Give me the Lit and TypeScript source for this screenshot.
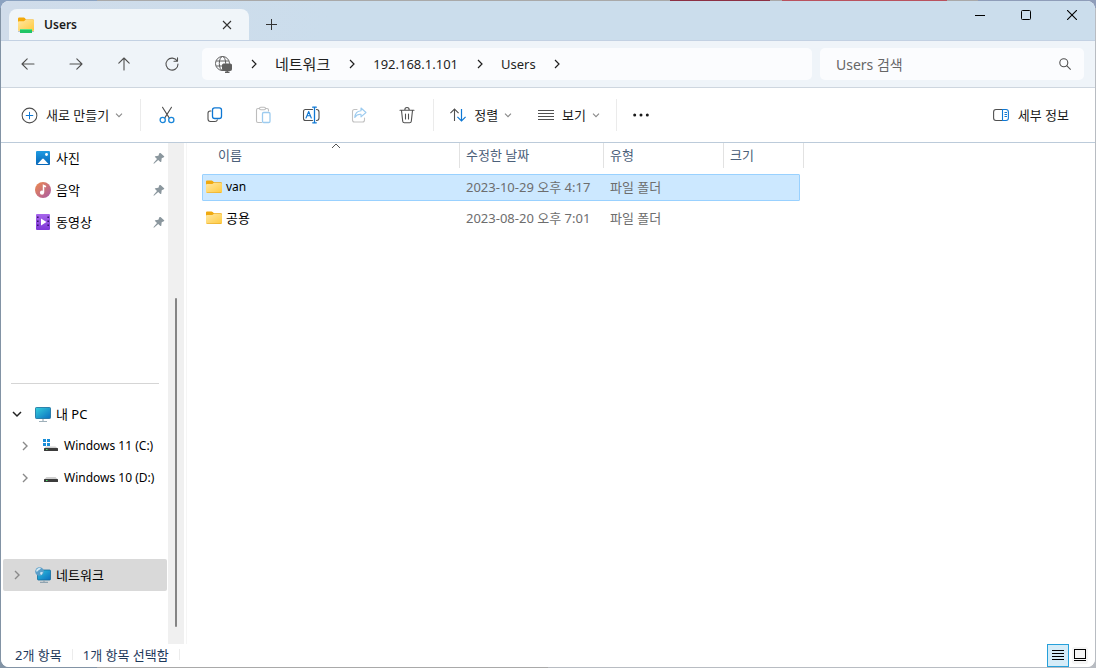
import { LitElement, html, css, svg, nothing } from "lit";
import { customElement, property, state } from "lit/decorators.js";
import { classMap } from "lit/directives/class-map.js";

const chevronRight = html`<svg width="8" height="10" viewBox="0 0 8 10" fill="none" stroke="currentColor" stroke-width="1.2"><path d="M2 1l4 4-4 4" /></svg>`;
const chevronDown = html`<svg width="8" height="8" viewBox="0 0 8 8" fill="none" stroke="#8a8a8a" stroke-width="1.1"><path d="M1 2.6l3 3 3-3" /></svg>`;

const folder = html`<svg width="16" height="14" viewBox="0 0 16 14">
  <defs><linearGradient id="f" x1="0" y1="0" x2="1" y2="1"><stop offset="0" stop-color="#ffe7a2" /><stop offset="1" stop-color="#ffca3e" /></linearGradient></defs>
  <path d="M0 1.5Q0 .5 1 .5h4.6q.6 0 1 .4L8 2.2h7q1 0 1 1V7H0z" fill="#f0a90f" />
  <path d="M0 5q0-1 1-1h4.8q.5 0 .9-.3L7.6 3H15q1 0 1 1v8q0 1-1 1H1q-1 0-1-1z" fill="url(#f)" />
  <path d="M.5 12.6q.2.4.8.4h13.4q.6 0 .8-.4z" fill="#e3a11c" /></svg>`;

const netFolder = html`<svg width="18" height="18" viewBox="0 0 18 18">
  <defs><linearGradient id="nf" x1="0" y1="0" x2="1" y2="1"><stop offset="0" stop-color="#ffe7a2" /><stop offset="1" stop-color="#ffca3e" /></linearGradient></defs>
  <path d="M1 3q0-1.400 1.200-1.400h4.600q.6 0 1 .5L9 3.400h7q1 0 1 1V8H1z" fill="#f3a90a" />
  <path d="M1 6.200q0-1 1-1h5l1.600-1.400H16q1 0 1 1V14q0 1-1 1H2q-1 0-1-1z" fill="url(#nf)" />
  <path d="M1 15.500h16" stroke="#b9c5cc" />
  <rect x="3" y="13" width="12" height="4" rx=".6" fill="#1fc566" /><path d="M3 13.500h12" stroke="#5be584" /></svg>`;

const globe = html`<svg width="17" height="17" viewBox="0 0 17 17" fill="none" stroke="#5f5f5f" stroke-width="1">
  <circle cx="7.500" cy="7.500" r="7" /><ellipse cx="7.500" cy="7.500" rx="3.200" ry="7" /><path d="M1.200 5h12.600M1.200 10h7" />
  <rect x="7.500" y="8" width="9" height="6.500" rx="1" fill="#5f5f5f" stroke="#5f5f5f" /><path d="M10 16.300h4.500M12.200 14v2" stroke-width="1.400" /></svg>`;

const line = (content: unknown, size = 18) =>
  html`<svg width=${size} height=${size} viewBox="0 0 18 18" fill="none" stroke="#505050" stroke-width="1.1" stroke-linecap="round" stroke-linejoin="round">${content}</svg>`;

const nav = {
  back: line(svg`<path d="M15 9H3M8.200 3.800L3 9l5.200 5.200" />`),
  forward: line(svg`<path d="M3 9h12M9.800 3.800L15 9l-5.200 5.200" />`),
  up: line(svg`<path d="M9 15V3M3.800 8.200L9 3l5.200 5.200" />`),
  refresh: line(svg`<path d="M14.200 6.100A6 6 0 1 0 15 9M14.500 2.800v3.500H11" />`),
};

const tools = {
  add: line(svg`<circle cx="9" cy="9" r="7.800" /><path d="M9 5.500v7M5.500 9h7" stroke="#0f78d4" />`, 17),
  cut: line(svg`<path d="M4.500 1.300l6.700 10.600M13.500 1.300L6.800 11.900" /><g stroke="#1a86d9" stroke-width="1.300"><circle cx="4.700" cy="14" r="2.600" /><circle cx="13.300" cy="14" r="2.600" /></g>`),
  copy: line(svg`<path d="M5 5H4.200Q2 5 2 7.200V13q0 2.500 2.500 2.500H9q2 0 2.300-1.700" /><rect x="6.500" y="1.800" width="9" height="10.700" rx="2.200" stroke="#0f78d4" stroke-width="1.300" />`),
  paste: line(svg`<g stroke="#bdbdbd"><path d="M5.500 2.500H4Q2.500 2.500 2.500 4v11q0 1.500 1.500 1.500h3.500M11.500 2.500H13q1.500 0 1.500 1.500v1" /><rect x="5.500" y="1.200" width="6" height="2.600" rx="1.200" /></g><rect x="8.500" y="6.500" width="7.500" height="10" rx="1.200" stroke="#9ccbef" stroke-width="1.300" />`),
  rename: line(svg`<path d="M10.500 3.500h-7Q1.500 3.500 1.500 5.500v7q0 2 2 2h7M14.500 3.500q2.500 0 2.500 2.500v6q0 2.500-2.500 2.500" /><path d="M4 12l2.700-6.500L9.300 12M5 9.800h3.500" stroke="#0f78d4" /><path d="M12.500 1.200v15.600M10.700 1.200h3.600M10.700 16.800h3.600" stroke="#0f78d4" stroke-width="1.300" />`),
  share: line(svg`<path d="M7 3.500H4.500q-2 0-2 2V14q0 2 2 2h8q2 0 2-2v-2" stroke="#c2c2c2" /><path d="M11 2l5 4.500-5 4.300V8.300Q7 8 4.800 11.500 5.200 5.300 11 4.800z" stroke="#9ccbef" />`),
  remove: line(svg`<path d="M2 4.200h14M6.800 4q0-2.500 2.200-2.500T11.200 4M3.500 4.500l1.200 10.700q.2 1.600 1.600 1.600h5.400q1.400 0 1.600-1.600L14.500 4.500M7.500 8v5M10.500 8v5" />`),
  sort: html`<svg width="16" height="16" viewBox="0 0 16 16" fill="none" stroke="#505050" stroke-width="1.100"><path d="M4.500 14V2M.4 6.100L4.500 2l4.100 4.100" /><path d="M11.500 2v12M7.400 9.900l4.100 4.100 4.100-4.100" stroke="#0f78d4" stroke-width="1.200" /></svg>`,
  view: html`<svg width="16" height="16" viewBox="0 0 16 16" stroke="#505050" shape-rendering="crispEdges"><path d="M0 3.500h16M0 6.500h16M0 9.500h16M0 12.500h16" /></svg>`,
  more: html`<svg width="16" height="4" viewBox="0 0 16 4" fill="#1a1a1a"><circle cx="1.700" cy="2" r="1.500" /><circle cx="8" cy="2" r="1.500" /><circle cx="14.300" cy="2" r="1.500" /></svg>`,
  details: html`<svg width="16" height="14" viewBox="0 0 16 14" fill="none" stroke-width="1.100"><path d="M9.500 1.500H3Q.6 1.500.6 4v6q0 2.500 2.400 2.500h6.500" stroke="#505050" /><path d="M9.500 1.500H13q2.400 0 2.400 2.500v6q0 2.500-2.400 2.500H9.500zM11.500 4.500h2.500M11.500 6.500h2.500M11.500 8.500h2.500" stroke="#0f78d4" /></svg>`,
};

const places = {
  pictures: html`<svg width="16" height="16" viewBox="0 0 16 16"><defs><linearGradient id="p" x2="0" y2="1"><stop stop-color="#1f9be2" /><stop offset="1" stop-color="#0766b8" /></linearGradient></defs><rect x="1" y="1" width="14" height="14" rx="1" fill="url(#p)" /><path d="M2.500 14l4.700-5q.8-.8 1.600 0l4.700 5z" fill="#fff" /><circle cx="11.500" cy="4.500" r="1.400" fill="#fff" /></svg>`,
  music: html`<svg width="16" height="16" viewBox="0 0 16 16"><defs><linearGradient id="m" x2="1" y2="1"><stop stop-color="#ee8a4c" /><stop offset="1" stop-color="#a95aa6" /></linearGradient></defs><circle cx="8" cy="8" r="8" fill="url(#m)" /><path d="M8.500 10.500V3.500l2.500 1.200" stroke="#fff" stroke-width="1.500" fill="none" /><circle cx="7" cy="10.700" r="2.100" fill="#fff" /></svg>`,
  videos: html`<svg width="16" height="16" viewBox="0 0 16 16"><defs><linearGradient id="v" x2="0" y2="1"><stop stop-color="#a765ea" /><stop offset="1" stop-color="#7f37d8" /></linearGradient></defs><rect x="1" y="0" width="14" height="16" rx="1" fill="url(#v)" /><path d="M6 4.500v7L11.500 8z" fill="#fff" /><path d="M2.800 2.500v12M13.200 2.500v12" stroke="#3a1470" stroke-width="1.600" stroke-dasharray="1.600 2.400" /></svg>`,
  pc: html`<svg width="16" height="16" viewBox="0 0 16 16"><defs><linearGradient id="c" x2="1" y2="1"><stop stop-color="#35d0dc" /><stop offset="1" stop-color="#0b6fc0" /></linearGradient></defs><rect x=".5" y="1.500" width="15" height="11" rx=".8" fill="url(#c)" stroke="#146c9c" stroke-width=".8" /><path d="M8 13v2M4 15.500h8" stroke="#9fb0ba" stroke-width="1.200" /></svg>`,
  driveC: html`<svg width="16" height="16" viewBox="0 0 16 16"><path d="M0 1h3v3H0zM4 1h3v3H4zM0 5h3v3H0zM4 5h3v3H4z" fill="#1a8fd8" /><path d="M3 8.500h9.500L15 10.500H1z" fill="#cfcfcf" /><rect x="1" y="10" width="14" height="3" rx=".5" fill="#3b3b3b" /><path d="M3 11.500h1.500" stroke="#4be36a" /></svg>`,
  driveD: html`<svg width="16" height="16" viewBox="0 0 16 16"><path d="M3.500 7h9l2.500 2.500H1z" fill="#cfcfcf" /><rect x="1" y="9" width="14" height="3" rx=".5" fill="#3b3b3b" /><path d="M3 10.500h1.500" stroke="#4be36a" /></svg>`,
  network: html`<svg width="16" height="16" viewBox="0 0 16 16"><defs><linearGradient id="n" x2="1" y2="1"><stop stop-color="#2fc4dc" /><stop offset="1" stop-color="#0b6fc0" /></linearGradient></defs><rect x="2.500" y="3" width="13" height="10" rx=".8" fill="url(#n)" stroke="#146c9c" stroke-width=".8" /><path d="M9 13v2M5 15.400h8" stroke="#8fa3b0" stroke-width="1.200" /><circle cx="4.500" cy="4.500" r="4.300" fill="#5b9fc9" /><path d="M1.500 2.500Q4 0 6 1.300 5 3 3.500 3.200 3 5 1 4.500zM5 5.500q2-1 3 0L6.500 8Q5 7.500 5 5.500z" fill="#cfe7f4" /></svg>`,
};

const pin = html`<svg width="12" height="12" viewBox="0 0 12 12" fill="#8b979e"><path d="M6.300 1.300q.5-.7 1.200-.2l3.600 3.200q.6.7-.3 1L8.700 6.300 8.300 9.500q-.2.900-.9.400L5.200 8.100 1 11.800l-.6-.6L4 7 2 5.100q-.5-.7.300-.9l3.100-.4z" /></svg>`;

interface Place { name: string; icon: keyof typeof places; pinned?: boolean; open?: boolean; child?: boolean; closed?: boolean; current?: boolean }

const pinned: Place[] = [
  { name: "사진", icon: "pictures", pinned: true },
  { name: "음악", icon: "music", pinned: true },
  { name: "동영상", icon: "videos", pinned: true },
];
const devices: Place[] = [
  { name: "내 PC", icon: "pc", open: true },
  { name: "Windows 11 (C:)", icon: "driveC", closed: true, child: true },
  { name: "Windows 10 (D:)", icon: "driveD", closed: true, child: true },
];
const network: Place[] = [{ name: "네트워크", icon: "network", closed: true, current: true }];

const files = [
  { name: "van", date: "2023-10-29 오후 4:17", type: "파일 폴더", size: "" },
  { name: "공용", date: "2023-08-20 오후 7:01", type: "파일 폴더", size: "" },
];

const base = css`
  :host { box-sizing: border-box; }
  *, *::before, *::after { box-sizing: border-box; }
  button { font: inherit; color: inherit; background: none; border: 0; padding: 0; margin: 0; display: flex; align-items: center; justify-content: center; }
  a { color: inherit; text-decoration: none; }
  svg { display: block; flex: none; }
`;

@customElement("title-bar")
class TitleBar extends LitElement {
  static styles = [base, css`
    :host { display: flex; height: 40px; padding: 8px 0 0 8px; background: linear-gradient(90deg, #d0dcea, #cbddec 30%); border-bottom: 1px solid #c3d1e3; }
    .tab { display: flex; align-items: center; width: 240px; height: 31px; padding: 0 14px 0 8px; gap: 9px; background: #f0f5f9; border-radius: 8px 8px 0 0; }
    .name { flex: 1; font-size: 12px; font-weight: 600; }
    .add { width: 45px; height: 30px; }
    .controls { display: flex; margin: -8px 0 0 auto; }
    .controls button { width: 46px; height: 28px; }
  `];
  render() {
    return html`
      <div class="tab">
        ${netFolder}<span class="name">Users</span>
        <button aria-label="탭 닫기"><svg width="16" height="16" viewBox="0 0 16 16" stroke="#333" stroke-width="1.100"><path d="M4 4l8 8M12 4l-8 8" /></svg></button>
      </div>
      <button class="add" aria-label="새 탭"><svg width="11" height="11" viewBox="0 0 11 11" stroke="#333"><path d="M5.500 0v11M0 5.500h11" /></svg></button>
      <div class="controls">
        <button aria-label="최소화"><svg width="10" height="10" viewBox="0 0 10 10" stroke="#000"><path d="M0 5.500h10" /></svg></button>
        <button aria-label="최대화"><svg width="10" height="10" viewBox="0 0 10 10" fill="none" stroke="#000"><rect x=".5" y=".5" width="9" height="9" rx="1" /></svg></button>
        <button aria-label="닫기"><svg width="10" height="10" viewBox="0 0 10 10" stroke="#000" stroke-width="1.100"><path d="M0 0l10 10M10 0L0 10" /></svg></button>
      </div>`;
  }
}

@customElement("address-bar")
class AddressBar extends LitElement {
  static styles = [base, css`
    :host { display: flex; align-items: center; height: 47px; padding: 0 11px 0 3px; background: #eff4f9; border-bottom: 1px solid #ced6df; }
    .move { width: 48px; height: 32px; }
    .path { display: flex; align-items: center; flex: 1; height: 32px; margin: 0 8px 0 6px; padding: 0 13px; background: #fbfcfe; border-radius: 5px; font-size: 13px; color: #1f1f1f; }
    .arrow { display: flex; justify-content: center; width: 43px; }
    .host { font-size: 15px; }
    .search { display: flex; align-items: center; width: 264px; height: 32px; padding: 0 12px 0 16px; background: #fbfcfe; border-radius: 5px; }
    .search input { flex: 1; min-width: 0; height: 24px; padding: 0; border: 0; outline: 0; background: none; font: inherit; font-size: 14px; }
    .search input::placeholder { color: #666; opacity: 1; }
  `];
  render() {
    const arrow = html`<span class="arrow">${chevronRight}</span>`;
    return html`
      <button class="move" aria-label="뒤로">${nav.back}</button>
      <button class="move" aria-label="앞으로">${nav.forward}</button>
      <button class="move" aria-label="위로">${nav.up}</button>
      <button class="move" aria-label="새로 고침">${nav.refresh}</button>
      <nav class="path">
        ${globe}${arrow}<a class="host" href="#network">네트워크</a>${arrow}<a href="#host">192.168.1.101</a>${arrow}<a href="#users">Users</a>${arrow}
      </nav>
      <label class="search">
        <input type="search" placeholder="Users 검색" aria-label="Users 검색" />
        <svg width="14" height="14" viewBox="0 0 14 14" fill="none" stroke="#505050" stroke-width="1.100"><circle cx="5.800" cy="5.800" r="4" /><path d="M8.700 8.700l4 4" /></svg>
      </label>`;
  }
}

@customElement("command-bar")
class CommandBar extends LitElement {
  static styles = [base, css`
    :host { display: flex; align-items: center; height: 55px; padding: 0 26px 0 20px; background: #fff; border-bottom: 1px solid #bccbda; color: #1a1a1a; font-size: 13px; }
    .text { height: 32px; gap: 8px; }
    .text svg:last-child { margin-left: -2px; }
    .icon { width: 48px; height: 32px; }
    .rule { width: 1px; height: 32px; background: #ebebeb; margin: 0 16px; }
    .before { margin: 0 2px 0 17px; }
    .after { margin-left: 2px; }
    .view { margin-left: 26px; }
    .last { margin-right: 0; }
    .details { margin-left: auto; gap: 9px; }
  `];
  render() {
    return html`
      <button class="text">${tools.add}<span>새로 만들기</span>${chevronDown}</button>
      <span class="rule before"></span>
      <button class="icon" aria-label="잘라내기">${tools.cut}</button>
      <button class="icon" aria-label="복사">${tools.copy}</button>
      <button class="icon" aria-label="붙여넣기">${tools.paste}</button>
      <button class="icon" aria-label="이름 바꾸기">${tools.rename}</button>
      <button class="icon" aria-label="공유">${tools.share}</button>
      <button class="icon" aria-label="삭제">${tools.remove}</button>
      <span class="rule after"></span>
      <button class="text">${tools.sort}<span>정렬</span>${chevronDown}</button>
      <button class="text view">${tools.view}<span>보기</span>${chevronDown}</button>
      <span class="rule last"></span>
      <button class="icon" aria-label="더 보기">${tools.more}</button>
      <button class="text details">${tools.details}<span>세부 정보</span></button>`;
  }
}

@customElement("place-list")
class PlaceList extends LitElement {
  @property({ attribute: false }) places: Place[] = [];
  static styles = [base, css`
    :host { display: block; padding: 0 1px 0 2px; font-size: 13px; color: #000; }
    .place { display: flex; align-items: center; height: 32px; padding-right: 2px; border-radius: 2px; }
    .twist { display: flex; justify-content: center; width: 28px; margin-right: 4px; color: #8a8a8a; }
    .child .twist { width: 44px; margin-right: -4px; }
    .child { font-size: 12px; white-space: nowrap; }
    .name { flex: 1; margin-left: 5px; }
    .current { background: #d9d9d9; }
  `];
  render() {
    return this.places.map((p) => html`
      <a href="#place" class=${classMap({ place: true, child: !!p.child, current: !!p.current })}>
        <span class="twist">${p.open
          ? html`<svg width="10" height="8" viewBox="0 0 10 8" fill="none" stroke="#222" stroke-width="1.500"><path d="M1 2l4 4 4-4" /></svg>`
          : p.closed ? html`<svg width="8" height="10" viewBox="0 0 8 10" fill="none" stroke="#8a8a8a" stroke-width="1.400"><path d="M2 1l4 4-4 4" /></svg>` : nothing}</span>
        ${places[p.icon]}<span class="name">${p.name}</span>${p.pinned ? pin : nothing}
      </a>`);
  }
}

@customElement("file-table")
class FileTable extends LitElement {
  @state() private selected = 0;
  static styles = [base, css`
    :host { display: block; font-size: 13px; color: #6d6d6d; }
    table, thead, tbody { display: block; }
    tr { display: grid; grid-template-columns: 258px 144px 120px 80px; width: 602px; }
    th { position: relative; height: 25px; padding: 0 0 0 6px; font-weight: 400; text-align: left; line-height: 24px; color: #4c607a; border-right: 1px solid #e2e2e2; }
    th:first-child { padding-left: 16px; }
    .sorted { position: absolute; top: 0; left: 129px; }
    tbody { display: grid; gap: 4px; padding-top: 6px; }
    tbody tr { grid-template-columns: 257px 144px 120px 75px; width: 598px; height: 27px; border: 1px solid transparent; border-radius: 1px; }
    td { display: flex; align-items: center; gap: 4px; padding: 0 0 2px 6px; }
    td:first-child { padding-left: 3px; color: #000; }
    .latin { font-size: 12px; }
    tbody .selected { background: #cce8ff; border-color: #99d1ff; }
  `];
  render() {
    return html`<table>
      <thead><tr>
        <th>이름<svg class="sorted" width="10" height="6" viewBox="0 0 10 6" fill="none" stroke="#555"><path d="M1 5l4-4 4 4" /></svg></th>
        <th>수정한 날짜</th><th>유형</th><th>크기</th>
      </tr></thead>
      <tbody>${files.map((f, i) => html`
        <tr class=${classMap({ selected: i === this.selected })} @click=${() => (this.selected = i)}>
          <td>${folder}<span class=${classMap({ latin: /^[a-z]/.test(f.name) })}>${f.name}</span></td>
          <td>${f.date}</td><td>${f.type}</td><td>${f.size}</td>
        </tr>`)}</tbody>
    </table>`;
  }
}

@customElement("status-bar")
class StatusBar extends LitElement {
  static styles = [base, css`
    :host { display: flex; justify-content: space-between; height: 23px; padding: 0 4px 0 14px; font-size: 13px; color: #1e395b; background: #fff; }
    .info { display: flex; align-items: center; height: 21px; }
    .rule { width: 1px; height: 11px; margin: 0 10px; background: #ececec; }
    .modes { display: flex; }
    .mode { width: 22px; height: 23px; }
    .on { border: 1px solid #26a0da; background: #d5ecf8; }
  `];
  render() {
    return html`
      <div class="info"><span>2개 항목</span><span class="rule"></span><span>1개 항목 선택함</span><span class="rule"></span></div>
      <div class="modes">
        <button class="mode on" aria-label="자세히"><svg width="12" height="11" viewBox="0 0 12 11" stroke="#000"><path d="M0 .5h12M0 3.500h12M0 6.500h12M0 9.500h12" /></svg></button>
        <button class="mode" aria-label="큰 아이콘"><svg width="16" height="17" viewBox="0 0 16 17" fill="none" stroke="#000"><rect width="16" height="17" rx="2" fill="#f5f5f5" stroke="none" /><rect x="2.500" y="2.500" width="11" height="9" /><path d="M2 13.500h12" /></svg></button>
      </div>`;
  }
}

@customElement("app-root")
class AppRoot extends LitElement {
  static styles = [base, css`
    :host {
      display: block; height: 100vh; padding: 1px;
      font-family: "Noto Sans", "Noto Sans CJK KR", sans-serif; line-height: 20px; color: #1a1a1a;
      background:
        linear-gradient(90deg, #8ba2c0 97px, #a9a9a9 97px 670px, #8c3043 670px 770px, #a9a9a9 770px 782px, #b9525e 782px 947px, #a9a9a9 947px 978px, #8f9db9 978px) top / 100% 8px no-repeat,
        linear-gradient(90deg, #8293a5 97px, #a9a9a9 97px 50%, #b8bcc2 50%);
    }
    .window { display: flex; flex-direction: column; height: 100%; overflow: hidden; border-radius: 8px; background: #fff; }
    .body { display: flex; flex: 1; min-height: 0; }
    .side { width: 167px; margin-top: -1px; overflow: hidden; }
    .split { height: 1px; border: 0; margin: 145px 9px 14px 10px; background: #d5d5d5; }
    .group { margin-top: 65px; }
    .track { display: flex; justify-content: center; align-items: flex-end; width: 16px; padding-bottom: 17px; background: #f0f0f0; }
    .thumb { width: 2px; height: 68%; border-radius: 1px; background: #858585; }
    .files { flex: 1; margin-left: 2px; padding-left: 15px; border-left: 1px solid #f5f5f5; }
  `];
  render() {
    return html`<div class="window">
      <title-bar></title-bar>
      <address-bar></address-bar>
      <command-bar></command-bar>
      <div class="body">
        <nav class="side">
          <place-list .places=${pinned}></place-list>
          <hr class="split" />
          <place-list .places=${devices}></place-list>
          <place-list class="group" .places=${network}></place-list>
        </nav>
        <div class="track"><div class="thumb"></div></div>
        <main class="files"><file-table></file-table></main>
      </div>
      <status-bar></status-bar>
    </div>`;
  }
}
